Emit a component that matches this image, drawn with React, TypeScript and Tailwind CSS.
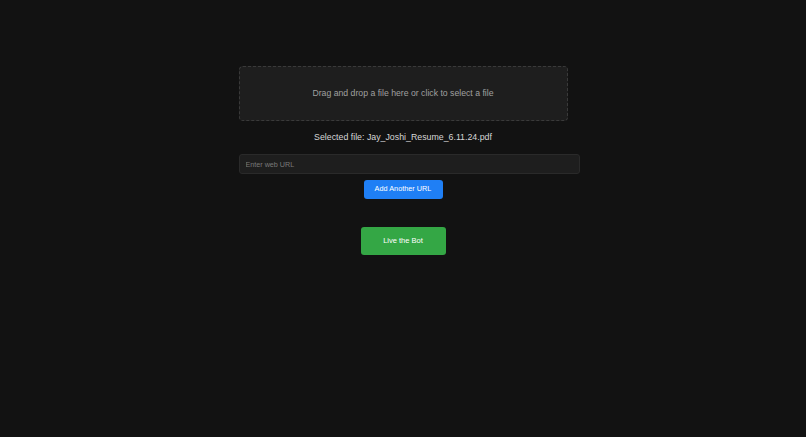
export default function App() {
  return (
    <div className="min-h-[437px] bg-[#121212] font-['Liberation_Sans',Arial,sans-serif]">
      <div className="mx-auto flex w-[329px] flex-col items-center pt-[66px]">
        <div className="flex h-[55px] w-full items-center justify-center rounded-[4px] border border-dashed border-[#3a3a3a] bg-[#1e1e1e] text-[8.7px] text-[#a0a0a0]">
          Drag and drop a file here or click to select a file
        </div>
        <p className="mt-[9px] text-[8.8px] leading-[14px] text-[#d6d6d6]">
          Selected file: Jay_Joshi_Resume_6.11.24.pdf
        </p>
        <div className="mt-[10px] w-full">
          <input
            placeholder="Enter web URL"
            className="block h-[20px] w-[341px] rounded-[3px] border border-[#2a2a2a] bg-[#1e1e1e] px-[6px] text-[7.2px] text-[#ddd] outline-none placeholder:text-[#7a7a7a]"
          />
        </div>
        <button className="mt-[6px] h-[19px] w-[79px] rounded-[3px] bg-[#1f7ff5] text-[7.3px] text-white">
          Add Another URL
        </button>
        <button className="mt-[28px] h-[28px] w-[85px] rounded-[3px] bg-[#34a745] text-[7.5px] text-white">
          Live the Bot
        </button>
      </div>
    </div>
  );
}
